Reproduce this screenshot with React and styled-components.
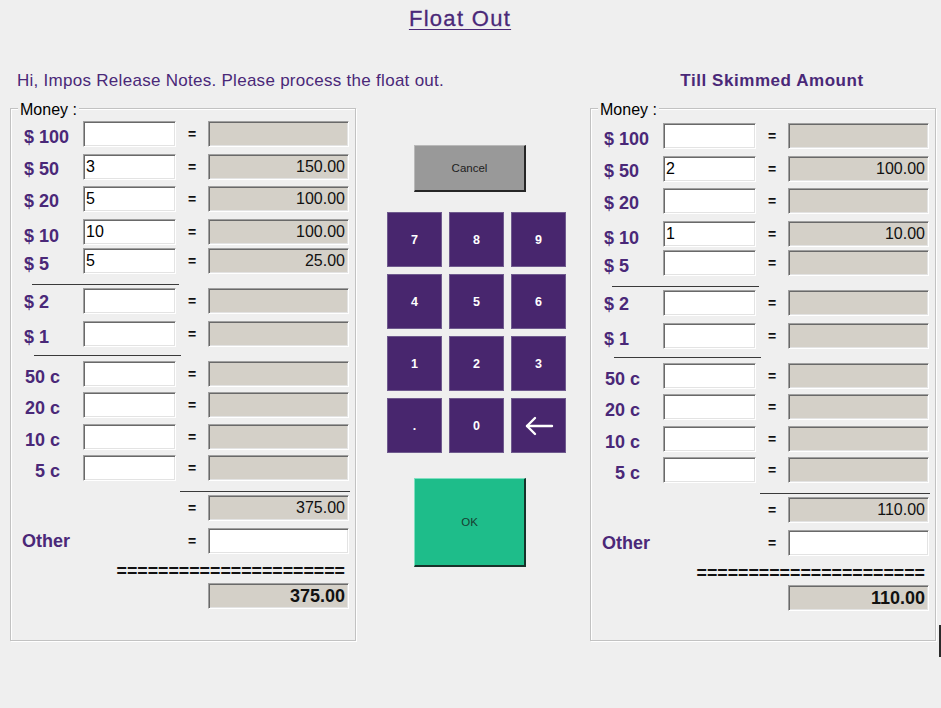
import React from 'react';
import styled, { createGlobalStyle } from 'styled-components';

const PURPLE = '#4a2878';
const BG = '#efefef';

const GlobalStyle = createGlobalStyle`
  html, body { margin: 0; padding: 0; background: ${BG}; }
  body {
    font-family: "Liberation Sans", Arial, sans-serif;
    width: 941px; height: 708px; overflow: hidden;
  }
  * { box-sizing: border-box; }
`;

const Page = styled.div`
  position: relative;
  width: 941px;
  height: 708px;
  padding-top: 6px;
`;

const Title = styled.h1`
  margin: 0;
  padding-right: 21px;
  text-align: center;
  font-size: 22px;
  line-height: 26px;
  font-weight: normal;
  letter-spacing: 1.3px;
  color: ${PURPLE};
  text-decoration: underline;
  text-underline-offset: 3px;
  text-decoration-thickness: 1px;
  -webkit-text-stroke: 0.3px ${PURPLE};
`;

const Main = styled.div`
  display: flex;
  align-items: flex-start;
  margin-top: 39px;
  padding-left: 10px;
`;

const Column = styled.section`
  display: flex;
  flex-direction: column;
  width: ${p => p.$w}px;
  margin-left: ${p => p.$ml || 0}px;
`;

const Greeting = styled.div`
  height: 20px;
  padding-left: 7px;
  font-size: 17px;
  line-height: 20px;
  letter-spacing: 0.28px;
  white-space: nowrap;
  color: ${PURPLE};
`;

const Heading = styled.div`
  height: 20px;
  padding-left: 18px;
  text-align: center;
  font-size: 17px;
  line-height: 20px;
  font-weight: bold;
  letter-spacing: 0.55px;
  white-space: nowrap;
  color: ${PURPLE};
`;

const GroupBox = styled.div`
  display: flex;
  flex-direction: column;
  margin-top: 17px;
  height: 533px;
  border: 1px solid #c2c2c2;
  box-shadow: inset 1px 1px 0 #ffffff, 1px 1px 0 #ffffff;
`;

const Legend = styled.div`
  align-self: flex-start;
  margin: -9px 0 0 7px;
  padding: 0 2px;
  height: 19px;
  background: ${BG};
  font-size: 16px;
  line-height: 19px;
  color: #000;
`;

const Row = styled.div`
  display: grid;
  grid-template-columns: 72px 93px 32px 141px;
  align-items: center;
  height: 26px;
  margin-top: ${p => p.$mt}px;
`;

const Label = styled.div`
  padding-top: ${p => p.$drop}px;
  padding-left: ${p => (p.$cents ? 0 : 13)}px;
  padding-right: ${p => (p.$cents ? 23 : 0)}px;
  text-align: ${p => (p.$cents ? 'right' : 'left')};
  font-size: 18px;
  font-weight: bold;
  line-height: 20px;
  white-space: nowrap;
  color: ${PURPLE};
`;

const OtherLabel = styled.div`
  grid-column: span 2;
  padding-left: 11px;
  font-size: 18px;
  font-weight: bold;
  line-height: 20px;
  color: ${PURPLE};
`;

const sunken = `
  border: 1px solid;
  border-color: #a0a0a0 #ffffff #ffffff #a0a0a0;
  box-shadow: inset 1px 1px 0 #696969, inset -1px -1px 0 #e3e3e3;
`;

const CountInput = styled.input`
  width: 93px;
  height: 26px;
  margin: 0;
  padding: 0 0 0 2px;
  ${sunken}
  background: #ffffff;
  font-family: "Liberation Sans", Arial, sans-serif;
  font-size: 16px;
  color: #000;
  outline: none;
`;

const Eq = styled.div`
  text-align: center;
  font-size: 14px;
  font-weight: bold;
  color: #111;
`;

const ValueBox = styled.div`
  width: 141px;
  height: 26px;
  padding-right: 3px;
  ${sunken}
  background: ${p => (p.$white ? '#ffffff' : '#d4d0c8')};
  text-align: right;
  font-size: ${p => (p.$bold ? 18 : 16)}px;
  font-weight: ${p => (p.$bold ? 'bold' : 'normal')};
  line-height: 24px;
  color: #111;
`;

const Rule = styled.div`
  height: 1px;
  margin-top: ${p => p.$mt}px;
  margin-left: ${p => p.$ml}px;
  width: ${p => p.$w}px;
  background: #3a3a3a;
`;

const EqualsLine = styled.div`
  margin-top: 8px;
  padding-right: 10px;
  height: 18px;
  text-align: right;
  font-size: 17.8px;
  font-weight: bold;
  line-height: 18px;
  color: #111;
  white-space: nowrap;
`;

const FinalRow = styled.div`
  display: flex;
  justify-content: flex-end;
  padding-right: 6px;
  margin-top: 3px;
`;

const CancelButton = styled.button`
  margin: 74px 0 0 27px;
  width: 112px;
  height: 47px;
  padding: 0;
  background: #999999;
  border-style: solid;
  border-width: 1px 2px 2px 1px;
  border-color: #b9b9b9 #262626 #262626 #b9b9b9;
  font-family: "Liberation Sans", Arial, sans-serif;
  font-size: 11.5px;
  color: #1e1e1e;
`;

const Keypad = styled.div`
  display: grid;
  grid-template-columns: repeat(3, 55px);
  grid-auto-rows: 55px;
  gap: 7px;
  margin-top: 20px;
`;

const Key = styled.button`
  display: flex;
  align-items: center;
  justify-content: center;
  padding: 0;
  background: #48266e;
  border: 1px solid #6f5a8e;
  font-family: "Liberation Sans", Arial, sans-serif;
  font-size: 12.5px;
  font-weight: bold;
  color: #ffffff;
`;

const OkButton = styled.button`
  margin: 25px 0 0 27px;
  width: 112px;
  height: 89px;
  padding: 0;
  background: #1ebd8a;
  border-style: solid;
  border-width: 1px 2px 2px 1px;
  border-color: #7fe0c0 #17322a #17322a #7fe0c0;
  font-family: "Liberation Sans", Arial, sans-serif;
  font-size: 11.5px;
  color: #173d31;
`;

const EdgeMark = styled.div`
  position: absolute;
  right: 0;
  top: 625px;
  width: 2px;
  height: 32px;
  background: #2a2a2a;
`;

const BackArrow = () => (
  <svg width="30" height="20" viewBox="0 0 30 20" fill="none" stroke="#fff" strokeWidth="2.4" strokeLinecap="round" strokeLinejoin="round">
    <path d="M28 10H3" />
    <path d="M11 2L3 10L11 18" />
  </svg>
);

const ROWS = [
  { key: '100', label: '$ 100', mt: 0, drop: 5 },
  { key: '50', label: '$ 50', mt: 7, drop: 4 },
  { key: '20', label: '$ 20', mt: 6, drop: 4 },
  { key: '10', label: '$ 10', mt: 5, drop: 9 },
  { key: '5', label: '$ 5', mt: 5, drop: 6, ruleAfter: { mt: 10, ml: 21, w: 147 } },
  { key: '2', label: '$ 2', mt: 3, drop: 2 },
  { key: '1', label: '$ 1', mt: 7, drop: 5, ruleAfter: { mt: 8, ml: 23, w: 147 } },
  { key: '0.5', label: '50 c', mt: 4, drop: 7, cents: true },
  { key: '0.2', label: '20 c', mt: 6, drop: 6, cents: true },
  { key: '0.1', label: '10 c', mt: 6, drop: 6, cents: true },
  { key: '0.05', label: '5 c', mt: 5, drop: 6, cents: true },
];

const MoneyPanel = ({ counts, values, total, first }) => (
  <GroupBox>
    <Legend>Money :</Legend>
    {ROWS.map((r, i) => (
      <React.Fragment key={r.key}>
        <Row $mt={i === 0 ? first : r.mt}>
          <Label $drop={r.drop} $cents={r.cents}>{r.label}</Label>
          <CountInput defaultValue={counts[r.key] || ''} />
          <Eq>=</Eq>
          <ValueBox>{values[r.key] || ''}</ValueBox>
        </Row>
        {r.ruleAfter && <Rule $mt={r.ruleAfter.mt} $ml={r.ruleAfter.ml} $w={r.ruleAfter.w} />}
      </React.Fragment>
    ))}
    <Rule $mt={10} $ml={169} $w={170} />
    <Row $mt={3}>
      <span />
      <span />
      <Eq>=</Eq>
      <ValueBox>{total}</ValueBox>
    </Row>
    <Row $mt={7}>
      <OtherLabel>Other</OtherLabel>
      <Eq>=</Eq>
      <ValueBox $white />
    </Row>
    <EqualsLine>======================</EqualsLine>
    <FinalRow>
      <ValueBox $bold>{total}</ValueBox>
    </FinalRow>
  </GroupBox>
);

const KEYS = ['7', '8', '9', '4', '5', '6', '1', '2', '3', '.', '0', 'back'];

export default function App() {
  return (
    <Page>
      <GlobalStyle />
      <Title>Float Out</Title>
      <Main>
        <Column $w={346}>
          <Greeting>Hi, Impos Release Notes. Please process the float out.</Greeting>
          <MoneyPanel
            first={2}
            counts={{ '50': '3', '20': '5', '10': '10', '5': '5' }}
            values={{ '50': '150.00', '20': '100.00', '10': '100.00', '5': '25.00' }}
            total="375.00"
          />
        </Column>
        <Column $w={179} $ml={31}>
          <CancelButton>Cancel</CancelButton>
          <Keypad>
            {KEYS.map(k => (
              <Key key={k}>{k === 'back' ? <BackArrow /> : k}</Key>
            ))}
          </Keypad>
          <OkButton>OK</OkButton>
        </Column>
        <Column $w={346} $ml={24}>
          <Heading>Till Skimmed Amount</Heading>
          <MoneyPanel
            first={4}
            counts={{ '50': '2', '10': '1' }}
            values={{ '50': '100.00', '10': '10.00' }}
            total="110.00"
          />
        </Column>
      </Main>
      <EdgeMark />
    </Page>
  );
}
